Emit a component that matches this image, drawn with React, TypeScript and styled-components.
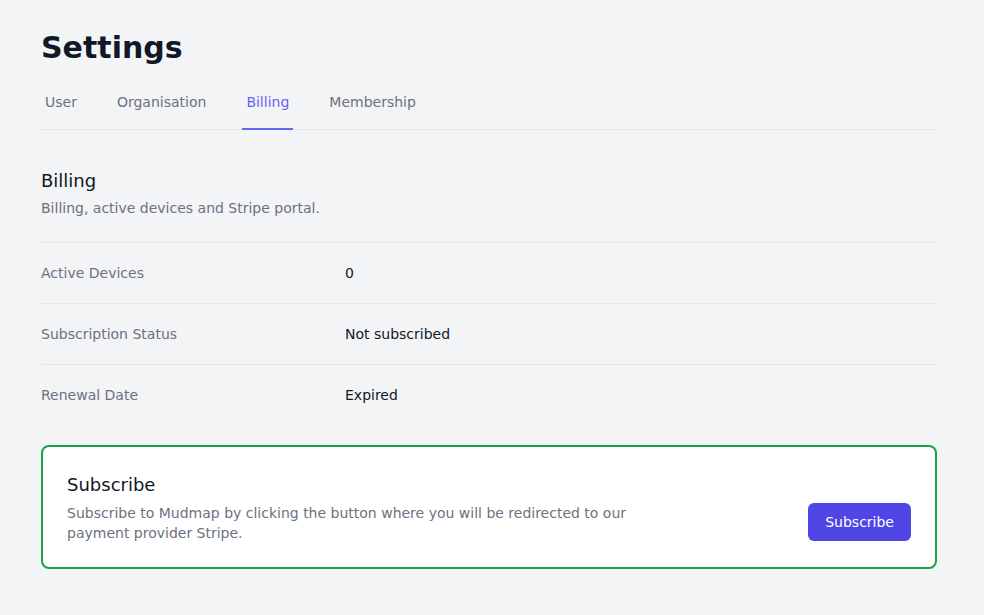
import React from "react";
import styled, { createGlobalStyle } from "styled-components";

const Global = createGlobalStyle`
  html, body { margin: 0; padding: 0; background: #f3f4f6; }
  body { font-family: "DejaVu Sans", sans-serif; color: #111827; }
  * { box-sizing: border-box; }
`;

const Page = styled.div`
  padding: 30px 47px 40px 41px;
`;

const Title = styled.h1`
  margin: 0;
  font-size: 30px;
  line-height: 36px;
  font-weight: 700;
  color: #111827;
`;

const Tabs = styled.nav`
  margin-top: 22px;
  display: flex;
  gap: 32px;
  border-bottom: 1px solid #e5e7eb;
`;

const Tab = styled.a<{ $active?: boolean }>`
  display: block;
  padding: 4px 4px 16px;
  font-size: 14px;
  line-height: 20px;
  color: ${(p) => (p.$active ? "#6366f1" : "#6b7280")};
  border-bottom: 2px solid ${(p) => (p.$active ? "#6366f1" : "transparent")};
  margin-bottom: -1px;
  text-decoration: none;
`;

const Section = styled.section`
  margin-top: 37px;
`;

const SectionTitle = styled.h3`
  margin: 0;
  font-size: 18px;
  line-height: 28px;
  font-weight: 400;
  color: #111827;
`;

const SectionDesc = styled.p`
  margin: 3px 0 0;
  font-size: 14px;
  line-height: 20px;
  color: #6b7280;
`;

const List = styled.dl`
  margin: 24px 0 0;
  border-top: 1px solid #e5e7eb;
`;

const Row = styled.div`
  display: grid;
  grid-template-columns: repeat(3, 1fr);
  gap: 16px;
  padding: 20px 0;
  & + & { border-top: 1px solid #e5e7eb; }
`;

const Label = styled.dt`
  font-size: 14px;
  line-height: 20px;
  color: #6b7280;
`;

const Value = styled.dd`
  margin: 0;
  grid-column: span 2;
  font-size: 14px;
  line-height: 20px;
  color: #111827;
`;

const Card = styled.div`
  margin-top: 20px;
  background: #fff;
  border: 2px solid #16a34a;
  border-radius: 8px;
  padding: 24px;
`;

const CardBody = styled.div`
  margin-top: 4px;
  display: flex;
  justify-content: space-between;
  align-items: flex-start;
`;

const CardText = styled.p`
  margin: 0;
  max-width: 576px;
  font-size: 14px;
  line-height: 20px;
  color: #6b7280;
`;

const Button = styled.button`
  font-family: inherit;
  font-size: 14px;
  line-height: 20px;
  color: #fff;
  background: #4f46e5;
  border: 1px solid transparent;
  border-radius: 6px;
  padding: 8px 16px;
  cursor: pointer;
`;

const rows = [
  ["Active Devices", "0"],
  ["Subscription Status", "Not subscribed"],
  ["Renewal Date", "Expired"],
];

export default function App() {
  return (
    <>
      <Global />
      <Page>
        <Title>Settings</Title>
        <Tabs>
          <Tab>User</Tab>
          <Tab>Organisation</Tab>
          <Tab $active>Billing</Tab>
          <Tab>Membership</Tab>
        </Tabs>
        <Section>
          <SectionTitle>Billing</SectionTitle>
          <SectionDesc>Billing, active devices and Stripe portal.</SectionDesc>
          <List>
            {rows.map(([l, v]) => (
              <Row key={l}>
                <Label>{l}</Label>
                <Value>{v}</Value>
              </Row>
            ))}
          </List>
          <Card>
            <SectionTitle>Subscribe</SectionTitle>
            <CardBody>
              <CardText>
                Subscribe to Mudmap by clicking the button where you will be redirected to our payment provider Stripe.
              </CardText>
              <Button>Subscribe</Button>
            </CardBody>
          </Card>
        </Section>
      </Page>
    </>
  );
}
